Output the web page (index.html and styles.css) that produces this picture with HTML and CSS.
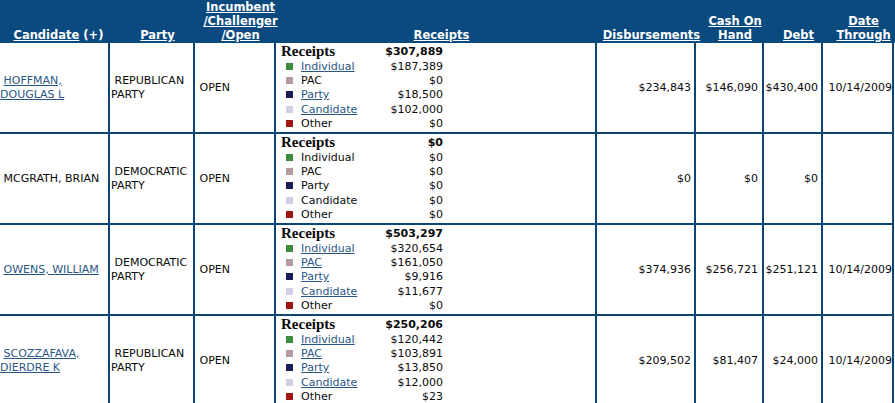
FILE: index.html
```html
<!DOCTYPE html>
<html>
<head>
<meta charset="utf-8">
<title>Candidates</title>
<link rel="stylesheet" href="styles.css">
</head>
<body>
<div class="head">
  <div class="th"><span class="h"><a href="#">Candidate</a> (+)</span></div>
  <div class="th"><span class="h"><a href="#">Party</a></span></div>
  <div class="th"><span class="h"><a href="#">Incumbent<br>/Challenger<br>/Open</a></span></div>
  <div class="th"><span class="h"><a href="#">Receipts</a></span></div>
  <div class="th"><span class="h"><a href="#">Disbursements</a></span></div>
  <div class="th"><span class="h"><a href="#">Cash On<br>Hand</a></span></div>
  <div class="th"><span class="h"><a href="#">Debt</a></span></div>
  <div class="th"><span class="h"><a href="#">Date<br>Through</a></span></div>
</div>
<div class="tbl">
  <div class="td cand"><div>&nbsp;<a href="#">HOFFMAN, DOUGLAS L</a></div></div>
  <div class="td party"><div>&nbsp;REPUBLICAN PARTY</div></div>
  <div class="td inc"><div>&nbsp;OPEN</div></div>
  <div class="td rec">
    <div class="legend">
      <div class="lh">Receipts</div><div class="lt">$307,889</div>
      <span class="k"><i class="sq g"></i></span><span class="lab"><a href="#">Individual</a></span><span class="amt">$187,389</span>
      <span class="k"><i class="sq p"></i></span><span class="lab">PAC</span><span class="amt">$0</span>
      <span class="k"><i class="sq n"></i></span><span class="lab"><a href="#">Party</a></span><span class="amt">$18,500</span>
      <span class="k"><i class="sq l"></i></span><span class="lab"><a href="#">Candidate</a></span><span class="amt">$102,000</span>
      <span class="k"><i class="sq r"></i></span><span class="lab">Other</span><span class="amt">$0</span>
    </div>
  </div>
  <div class="td num">$234,843</div>
  <div class="td num cash">$146,090</div>
  <div class="td num debt">$430,400</div>
  <div class="td date">10/14/2009</div>

  <div class="td cand"><div>&nbsp;MCGRATH, BRIAN</div></div>
  <div class="td party"><div>&nbsp;DEMOCRATIC PARTY</div></div>
  <div class="td inc"><div>&nbsp;OPEN</div></div>
  <div class="td rec">
    <div class="legend">
      <div class="lh">Receipts</div><div class="lt">$0</div>
      <span class="k"><i class="sq g"></i></span><span class="lab">Individual</span><span class="amt">$0</span>
      <span class="k"><i class="sq p"></i></span><span class="lab">PAC</span><span class="amt">$0</span>
      <span class="k"><i class="sq n"></i></span><span class="lab">Party</span><span class="amt">$0</span>
      <span class="k"><i class="sq l"></i></span><span class="lab">Candidate</span><span class="amt">$0</span>
      <span class="k"><i class="sq r"></i></span><span class="lab">Other</span><span class="amt">$0</span>
    </div>
  </div>
  <div class="td num">$0</div>
  <div class="td num cash">$0</div>
  <div class="td num debt">$0</div>
  <div class="td date"></div>

  <div class="td cand"><div>&nbsp;<a href="#">OWENS, WILLIAM</a></div></div>
  <div class="td party"><div>&nbsp;DEMOCRATIC PARTY</div></div>
  <div class="td inc"><div>&nbsp;OPEN</div></div>
  <div class="td rec">
    <div class="legend">
      <div class="lh">Receipts</div><div class="lt">$503,297</div>
      <span class="k"><i class="sq g"></i></span><span class="lab"><a href="#">Individual</a></span><span class="amt">$320,654</span>
      <span class="k"><i class="sq p"></i></span><span class="lab"><a href="#">PAC</a></span><span class="amt">$161,050</span>
      <span class="k"><i class="sq n"></i></span><span class="lab"><a href="#">Party</a></span><span class="amt">$9,916</span>
      <span class="k"><i class="sq l"></i></span><span class="lab"><a href="#">Candidate</a></span><span class="amt">$11,677</span>
      <span class="k"><i class="sq r"></i></span><span class="lab">Other</span><span class="amt">$0</span>
    </div>
  </div>
  <div class="td num">$374,936</div>
  <div class="td num cash">$256,721</div>
  <div class="td num debt">$251,121</div>
  <div class="td date">10/14/2009</div>

  <div class="td cand"><div>&nbsp;<a href="#">SCOZZAFAVA, DIERDRE K</a></div></div>
  <div class="td party"><div>&nbsp;REPUBLICAN PARTY</div></div>
  <div class="td inc"><div>&nbsp;OPEN</div></div>
  <div class="td rec">
    <div class="legend">
      <div class="lh">Receipts</div><div class="lt">$250,206</div>
      <span class="k"><i class="sq g"></i></span><span class="lab"><a href="#">Individual</a></span><span class="amt">$120,442</span>
      <span class="k"><i class="sq p"></i></span><span class="lab"><a href="#">PAC</a></span><span class="amt">$103,891</span>
      <span class="k"><i class="sq n"></i></span><span class="lab"><a href="#">Party</a></span><span class="amt">$13,850</span>
      <span class="k"><i class="sq l"></i></span><span class="lab"><a href="#">Candidate</a></span><span class="amt">$12,000</span>
      <span class="k"><i class="sq r"></i></span><span class="lab">Other</span><span class="amt">$23</span>
    </div>
  </div>
  <div class="td num">$209,502</div>
  <div class="td num cash">$81,407</div>
  <div class="td num debt">$24,000</div>
  <div class="td date">10/14/2009</div>
</div>
</body>
</html>
```
FILE: styles.css
```css
html {
  overflow: hidden;
}
body {
  margin: 0;
  background: #fff;
  color: #0a0a0a;
  font-family: "DejaVu Sans", Verdana, sans-serif;
  font-size: 11px;
}
a {
  color: #2a5686;
  text-decoration: underline;
}
.head,
.tbl {
  display: grid;
  grid-template-columns: 113px 85px 81px 321px 99px 68px 59px 71px;
  margin-left: -3px;
}
.head {
  height: 43px;
  background: #0b4a7f;
}
.tbl {
  grid-template-rows: repeat(4, 91px);
}
.th {
  box-sizing: border-box;
  min-width: 0;
  display: flex;
  justify-content: center;
  align-items: flex-end;
  padding: 0 0 1px 10px;
  color: #fff;
  font-weight: bold;
  font-size: 11.5px;
  line-height: 14px;
}
.h {
  white-space: nowrap;
  text-align: center;
}
.th a {
  color: #fff;
}
.td {
  box-sizing: border-box;
  min-width: 0;
  display: flex;
  align-items: center;
  border-right: 2px solid #0c4677;
  border-bottom: 2px solid #0c4677;
  line-height: 14px;
  background: #fff;
}
.cand {
  border-left: 2px solid #0c4677;
  padding: 0 1px;
}
.party,
.inc {
  padding: 0 1px;
}
.rec {
  align-items: flex-start;
  padding-left: 5px;
}
.legend {
  display: grid;
  grid-template-columns: 20px 82px 60px;
  grid-auto-rows: 14.2px;
  grid-template-rows: 17px;
  line-height: 14.2px;
}
.lh {
  grid-column: span 2;
  font-family: "Liberation Serif", "Times New Roman", serif;
  font-weight: bold;
  font-size: 15px;
  line-height: 17px;
}
.lt {
  font-weight: bold;
  text-align: right;
  line-height: 17px;
  white-space: nowrap;
}
.k {
  padding-left: 5px;
}
.sq {
  display: inline-block;
  width: 7px;
  height: 7px;
  vertical-align: baseline;
}
.g { background: #3d8b3d; }
.p { background: #b49c9e; }
.n { background: #1b1c5a; }
.l { background: #cfcfe5; }
.r { background: #a01414; }
.lab {
  white-space: nowrap;
}
.amt {
  text-align: right;
  white-space: nowrap;
}
.num {
  justify-content: flex-end;
  padding-right: 3px;
  white-space: nowrap;
}
.cash {
  padding-right: 4px;
}
.date {
  justify-content: flex-end;
  padding-right: 0;
  white-space: nowrap;
}
```
